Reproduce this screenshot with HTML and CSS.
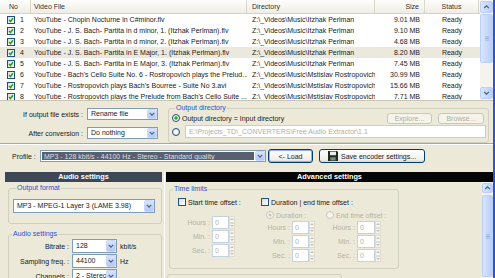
FILE: index.html
```html
<!DOCTYPE html>
<html lang="en">
<head>
  <meta charset="UTF-8">
  <title>Free Audio Extractor</title>
  <link rel="stylesheet" href="styles.css">
</head>
<body>
<div class="app">

  <!-- file list -->
  <div class="list">
    <div class="grid">
      <div class="row head">
        <div class="c-no">No</div>
        <div class="c-file">Video File</div>
        <div class="c-dir">Directory</div>
        <div class="c-size">Size</div>
        <div class="c-status">Status</div>
      </div>
      <div class="row">
        <div class="c-no"><span class="chk"><svg viewBox="0 0 6 6"><path d="M1 3l1.5 1.5L5 1.2"/></svg></span>1</div>
        <div class="c-file">YouTube - Chopin Nocturne in C#minor.flv</div>
        <div class="c-dir">Z:\_Videos\Music\Itzhak Perlman</div>
        <div class="c-size">9.01 MB</div>
        <div class="c-status">Ready</div>
      </div>
      <div class="row">
        <div class="c-no"><span class="chk"><svg viewBox="0 0 6 6"><path d="M1 3l1.5 1.5L5 1.2"/></svg></span>2</div>
        <div class="c-file">YouTube - J. S. Bach- Partita in d minor, 1. (Itzhak Perlman).flv</div>
        <div class="c-dir">Z:\_Videos\Music\Itzhak Perlman</div>
        <div class="c-size">9.10 MB</div>
        <div class="c-status">Ready</div>
      </div>
      <div class="row">
        <div class="c-no"><span class="chk"><svg viewBox="0 0 6 6"><path d="M1 3l1.5 1.5L5 1.2"/></svg></span>3</div>
        <div class="c-file">YouTube - J. S. Bach- Partita in d minor, 2. (Itzhak Perlman).flv</div>
        <div class="c-dir">Z:\_Videos\Music\Itzhak Perlman</div>
        <div class="c-size">4.68 MB</div>
        <div class="c-status">Ready</div>
      </div>
      <div class="row sel">
        <div class="c-no"><span class="chk"><svg viewBox="0 0 6 6"><path d="M1 3l1.5 1.5L5 1.2"/></svg></span>4</div>
        <div class="c-file">YouTube - J. S. Bach- Partita in E Major, 1. (Itzhak Perlman).flv</div>
        <div class="c-dir">Z:\_Videos\Music\Itzhak Perlman</div>
        <div class="c-size">8.20 MB</div>
        <div class="c-status">Ready</div>
      </div>
      <div class="row">
        <div class="c-no"><span class="chk"><svg viewBox="0 0 6 6"><path d="M1 3l1.5 1.5L5 1.2"/></svg></span>5</div>
        <div class="c-file">YouTube - J. S. Bach- Partita in E Major, 3. (Itzhak Perlman).flv</div>
        <div class="c-dir">Z:\_Videos\Music\Itzhak Perlman</div>
        <div class="c-size">7.45 MB</div>
        <div class="c-status">Ready</div>
      </div>
      <div class="row">
        <div class="c-no"><span class="chk"><svg viewBox="0 0 6 6"><path d="M1 3l1.5 1.5L5 1.2"/></svg></span>6</div>
        <div class="c-file">YouTube - Bach's Cello Suite No. 6 - Rostropovich plays the Prelud...</div>
        <div class="c-dir">Z:\_Videos\Music\Mstislav Rostropovich</div>
        <div class="c-size">30.99 MB</div>
        <div class="c-status">Ready</div>
      </div>
      <div class="row">
        <div class="c-no"><span class="chk"><svg viewBox="0 0 6 6"><path d="M1 3l1.5 1.5L5 1.2"/></svg></span>7</div>
        <div class="c-file">YouTube - Rostropovich plays Bach's Bourree - Suite No 3.avi</div>
        <div class="c-dir">Z:\_Videos\Music\Mstislav Rostropovich</div>
        <div class="c-size">15.66 MB</div>
        <div class="c-status">Ready</div>
      </div>
      <div class="row">
        <div class="c-no"><span class="chk"><svg viewBox="0 0 6 6"><path d="M1 3l1.5 1.5L5 1.2"/></svg></span>8</div>
        <div class="c-file">YouTube - Rostropovich plays the Prelude from Bach's Cello Suite ...</div>
        <div class="c-dir">Z:\_Videos\Music\Mstislav Rostropovich</div>
        <div class="c-size">7.71 MB</div>
        <div class="c-status">Ready</div>
      </div>
    </div>
    <div class="vscroll">
      <div class="sb-btn"><svg viewBox="0 0 8 5"><path d="M1 4L4 1l3 3"/></svg></div>
      <div class="sb-thumb"><svg viewBox="0 0 5 5"><path d="M0 .5h5M0 2.5h5M0 4.5h5"/></svg></div>
      <div class="sb-track"></div>
      <div class="sb-btn"><svg viewBox="0 0 8 5"><path d="M1 1l3 3 3-3"/></svg></div>
    </div>
  </div>

  <!-- output options -->
  <div class="opts">
    <div class="opt-left">
      <div class="field">
        <span class="lbl">If output file exists :</span>
        <div class="combo w71"><span class="val">Rename file</span><span class="drop"><svg viewBox="0 0 8 5"><path d="M1 1l3 3 3-3"/></svg></span></div>
      </div>
      <div class="field">
        <span class="lbl">After conversion :</span>
        <div class="combo w71"><span class="val">Do nothing</span><span class="drop"><svg viewBox="0 0 8 5"><path d="M1 1l3 3 3-3"/></svg></span></div>
      </div>
    </div>
    <fieldset class="outdir">
      <legend>Output directory</legend>
      <div class="od-row">
        <span class="radio on"></span>
        <span class="od-text">Output directory = Input directory</span>
        <span class="btn dis w45">Explore...</span>
        <span class="btn dis w46">Browse...</span>
      </div>
      <div class="od-row second">
        <span class="radio"></span>
        <div class="edit dis">E:\Projects_TD\_CONVERTERS\Free Audio Extractor\1.1</div>
      </div>
    </fieldset>
  </div>

  <div class="sep"></div>

  <!-- profile -->
  <div class="profile">
    <span class="plbl">Profile :</span>
    <div class="combo w226 prof"><span class="val">MP3 - 128 kbit/s - 44100 Hz - Stereo - Standard quality</span><span class="drop"><svg viewBox="0 0 8 5"><path d="M1 1l3 3 3-3"/></svg></span></div>
    <span class="btn def w45">&lt;- Load</span>
    <span class="btn w106 save">
      <svg class="floppy" viewBox="0 0 10 10"><path d="M0 0h9l1 1v9H0z" fill="#1f2d22"/><rect x="2" y="0.6" width="6" height="3.6" fill="#e9efe9"/><rect x="2.4" y="6.2" width="5.2" height="3.3" fill="#7d8b80"/></svg>
      Save encoder settings...
    </span>
  </div>

  <!-- settings panels -->
  <div class="panels">
    <div class="panel left">
      <div class="ph audio">Audio settings</div>
      <fieldset class="fmt">
        <legend>Output format</legend>
        <div class="combo w142 tall"><span class="val">MP3 - MPEG-1 Layer 3 (LAME 3.98)</span><span class="drop"><svg viewBox="0 0 8 5"><path d="M1 1l3 3 3-3"/></svg></span></div>
      </fieldset>
      <fieldset class="aset">
        <legend>Audio settings</legend>
        <div class="arow">
          <span class="albl">Bitrate :</span>
          <div class="combo w45 tall"><span class="val">128</span><span class="drop"><svg viewBox="0 0 8 5"><path d="M1 1l3 3 3-3"/></svg></span></div>
          <span class="unit">kbit/s</span>
        </div>
        <div class="arow">
          <span class="albl">Sampling freq. :</span>
          <div class="combo w45 tall"><span class="val">44100</span><span class="drop"><svg viewBox="0 0 8 5"><path d="M1 1l3 3 3-3"/></svg></span></div>
          <span class="unit">Hz</span>
        </div>
        <div class="arow">
          <span class="albl">Channels :</span>
          <div class="combo w45 tall"><span class="val">2 - Stereo</span><span class="drop"><svg viewBox="0 0 8 5"><path d="M1 1l3 3 3-3"/></svg></span></div>
        </div>
      </fieldset>
    </div>

    <div class="panel right">
      <div class="ph adv">Advanced settings</div>
      <div class="adv-body">
        <div class="adv-content">
          <fieldset class="limits">
            <legend>Time limits</legend>
            <div class="tl-cols">
              <div class="col-a">
                <div class="ck-row"><span class="box"></span>Start time offset :</div>
                <div class="spins">
                  <div class="sp-row"><span class="slbl">Hours :</span><span class="ed">0</span><span class="arr"><i class="up"></i><i class="dn"></i></span></div>
                  <div class="sp-row"><span class="slbl">Min. :</span><span class="ed">0</span><span class="arr"><i class="up"></i><i class="dn"></i></span></div>
                  <div class="sp-row"><span class="slbl">Sec. :</span><span class="ed">0</span><span class="arr"><i class="up"></i><i class="dn"></i></span></div>
                </div>
              </div>
              <div class="col-b">
                <div class="ck-row"><span class="box"></span>Duration | end time offset :</div>
                <div class="subcols">
                  <div class="sub dur">
                    <div class="rd-row"><span class="radio on dis"></span>Duration :</div>
                    <div class="sp-row"><span class="slbl">Hours :</span><span class="ed">0</span><span class="arr"><i class="up"></i><i class="dn"></i></span></div>
                    <div class="sp-row"><span class="slbl">Min. :</span><span class="ed">0</span><span class="arr"><i class="up"></i><i class="dn"></i></span></div>
                    <div class="sp-row"><span class="slbl">Sec. :</span><span class="ed">0</span><span class="arr"><i class="up"></i><i class="dn"></i></span></div>
                  </div>
                  <div class="sub end">
                    <div class="rd-row"><span class="radio dis"></span>End time offset :</div>
                    <div class="sp-row"><span class="slbl">Hours :</span><span class="ed">0</span><span class="arr"><i class="up"></i><i class="dn"></i></span></div>
                    <div class="sp-row"><span class="slbl">Min. :</span><span class="ed">0</span><span class="arr"><i class="up"></i><i class="dn"></i></span></div>
                    <div class="sp-row"><span class="slbl">Sec. :</span><span class="ed">0</span><span class="arr"><i class="up"></i><i class="dn"></i></span></div>
                  </div>
                </div>
              </div>
            </div>
          </fieldset>
          <div class="more"></div>
        </div>
        <div class="vscroll small">
          <div class="sb-btn"><svg viewBox="0 0 8 5"><path d="M1 4L4 1l3 3"/></svg></div>
          <div class="sb-thumb long"><svg viewBox="0 0 5 5"><path d="M0 .5h5M0 2.5h5M0 4.5h5"/></svg></div>
        </div>
      </div>
    </div>
  </div>

</div>
</body>
</html>
```

FILE: styles.css
```css
* {
  box-sizing: border-box;
}
body {
  margin: 0;
  width: 495px;
  height: 278px;
  overflow: hidden;
  background: #ece9d8;
  font-family: "Liberation Sans", Arial, sans-serif;
  font-size: 7px;
  color: #1a1a1a;
}
.app {
  display: flex;
  flex-direction: column;
  height: 278px;
  border-right: 2px solid #2a55d4;
  overflow: hidden;
}

/* list */
.list {
  display: flex;
  height: 101px;
  flex-shrink: 0;
  background: #fff;
  border-bottom: 1px solid #c9c6b6;
}
.grid {
  flex: 1;
  overflow: hidden;
}
.row {
  display: flex;
  height: 11px;
  line-height: 11px;
  white-space: nowrap;
}
.row > div {
  flex-shrink: 0;
  overflow: hidden;
}
.row.sel {
  background: #ebe9de;
}
.head {
  height: 14px;
  line-height: 13px;
  background: linear-gradient(#fdfdfb, #efede4);
  border-bottom: 1px solid #d6d2c2;
  color: #333;
}
.head > div {
  border-right: 1px solid #dcd8c8;
}
.c-no {
  width: 31px;
  padding-left: 7px;
  display: flex;
  align-items: center;
  gap: 5px;
}
.head .c-no {
  padding-left: 9px;
}
.c-file {
  width: 216px;
  padding-left: 3px;
}
.c-dir {
  width: 128px;
  padding-left: 5px;
}
.c-size {
  width: 50px;
  text-align: right;
  padding-right: 5px;
}
.c-status {
  width: 54px;
  text-align: center;
}
.chk {
  width: 8px;
  height: 8px;
  border: 1px solid #1c5180;
  background: linear-gradient(135deg, #dedcd3, #fff);
  display: flex;
}
.chk svg {
  width: 6px;
  height: 6px;
  fill: none;
  stroke: #21a121;
  stroke-width: 1.5;
}

/* scrollbars */
.vscroll {
  width: 13px;
  display: flex;
  flex-direction: column;
  background: #f4f3ee;
  padding: 1px 0;
}
.vscroll.small {
  width: 11px;
}
.sb-btn,
.sb-thumb {
  border: 1px solid #bcd0f7;
  border-radius: 2px;
  background: linear-gradient(90deg, #dbe6fd, #b9cdf8);
  display: flex;
  align-items: center;
  justify-content: center;
}
.sb-btn {
  height: 12px;
}
.sb-btn svg {
  width: 7px;
  height: 4px;
  fill: none;
  stroke: #4d6185;
  stroke-width: 1.5;
}
.sb-thumb {
  height: 49px;
  margin-top: 1px;
}
.sb-thumb.long {
  height: 100px;
  margin-top: 2px;
}
.sb-thumb svg {
  width: 4px;
  height: 5px;
  stroke: #8fa9e4;
  stroke-width: 1;
}
.sb-track {
  flex: 1;
}

/* combos, buttons, edits */
.combo {
  display: flex;
  height: 12px;
  line-height: 10px;
  border: 1px solid #7f9db9;
  background: #fff;
  white-space: nowrap;
}
.combo.tall {
  height: 14px;
  line-height: 12px;
}
.combo .val {
  flex: 1;
  padding-left: 3px;
  overflow: hidden;
}
.drop {
  width: 10px;
  border: 1px solid #c8d7fb;
  border-radius: 2px;
  background: linear-gradient(#d9e4fd, #b3c8f5);
  display: flex;
  align-items: center;
  justify-content: center;
}
.drop svg {
  width: 6px;
  height: 4px;
  fill: none;
  stroke: #4d6185;
  stroke-width: 1.6;
}
.combo.prof .val {
  margin: 1px;
  padding-left: 2px;
  background: #586070;
  color: #dcdde0;
}
.w45 { width: 45px; }
.w46 { width: 46px; }
.w71 { width: 71px; }
.w106 { width: 106px; }
.w142 { width: 142px; }
.w226 { width: 226px; }

.btn {
  display: flex;
  align-items: center;
  justify-content: center;
  height: 14px;
  border: 1px solid #003c74;
  border-radius: 3px;
  background: linear-gradient(#ffffff, #f0efea 80%, #d8d3c8);
  white-space: nowrap;
}
.btn.dis {
  height: 11px;
  border-color: #cac8bb;
  background: #f5f4ea;
  color: #b2afa2;
}
.btn.def {
  box-shadow: inset 0 0 0 1px #8fb2ec;
}
.edit {
  height: 13px;
  line-height: 11px;
  border: 1px solid #7f9db9;
  background: #fff;
  padding-left: 3px;
  white-space: nowrap;
  overflow: hidden;
}
.edit.dis {
  color: #b2afa2;
  border-color: #c3cfdd;
}

/* radio / checkbox */
.radio {
  width: 8px;
  height: 8px;
  flex-shrink: 0;
  border-radius: 50%;
  border: 1px solid #1c5180;
  background: radial-gradient(#fff, #dedcd2);
}
.radio.on {
  background: radial-gradient(circle, #3aa838 0 1.4px, #fff 2px, #e2e1d7);
}
.radio.dis {
  border-color: #cac8bb;
  background: #f6f5ee;
}
.radio.on.dis {
  background: radial-gradient(circle, #cac8bb 0 1.3px, #f6f5ee 1.8px);
}
.box {
  width: 8px;
  height: 8px;
  flex-shrink: 0;
  margin-right: 2px;
  border: 1px solid #1c5180;
  background: linear-gradient(135deg, #dedcd3, #fff);
}

/* group boxes */
fieldset {
  margin: 0;
  padding: 0;
  min-width: 0;
  border: 1px solid #d0d0bf;
  border-radius: 3px;
}
legend {
  margin-left: 3px;
  padding: 0 1px;
  line-height: 8px;
  color: #2255cc;
}

/* output options */
.opts {
  display: flex;
  height: 42px;
  flex-shrink: 0;
}
.opt-left {
  width: 165px;
  padding-top: 7px;
  display: flex;
  flex-direction: column;
  gap: 7px;
}
.field {
  display: flex;
  align-items: center;
}
.lbl {
  width: 83px;
  margin-right: 4px;
  text-align: right;
}
.outdir {
  margin: 3px 0 0 3px;
  width: 321px;
  height: 39px;
  padding: 0 4px 0 3px;
}
.od-row {
  display: flex;
  align-items: center;
  height: 12px;
  gap: 6px;
}
.od-row .od-text {
  margin-left: -4px;
  flex: 1;
}
.od-row.second {
  margin-top: 1px;
  height: 13px;
  gap: 5px;
}
.od-row.second .edit {
  flex: 1;
  margin-right: -2px;
}

.sep {
  height: 2px;
  flex-shrink: 0;
  border-top: 1px solid #aca899;
  border-bottom: 1px solid #fff;
}

/* profile */
.profile {
  display: flex;
  align-items: center;
  height: 22px;
  flex-shrink: 0;
  padding-left: 12px;
}
.plbl {
  width: 28px;
}
.profile .btn.def {
  margin-left: 2px;
}
.profile .save {
  margin-left: 6px;
  justify-content: flex-start;
  padding-left: 8px;
  gap: 3px;
}
.floppy {
  width: 10px;
  height: 10px;
}

/* panels */
.panels {
  flex: 1;
  display: flex;
  padding-top: 5px;
  min-height: 0;
}
.panel {
  display: flex;
  flex-direction: column;
  overflow: hidden;
}
.panel.left {
  width: 165px;
  padding: 0 2px 0 5px;
  border-right: 1px solid #fff;
}
.panel.right {
  flex: 1;
  padding-left: 1px;
}
.ph {
  height: 10px;
  flex-shrink: 0;
  line-height: 10px;
  text-align: center;
  font-weight: bold;
  font-size: 7.3px;
  color: #fff;
}
.ph.audio {
  background: #3e4755;
}
.ph.adv {
  background: #050505;
}
.fmt {
  margin: 2px 0 0 3px;
  width: 154px;
  padding: 7px 4px 10px;
}
.aset {
  margin: 6px 0 0 3px;
  width: 154px;
  padding: 1px 0 20px;
}
.arow {
  display: flex;
  align-items: center;
  height: 14px;
  margin-bottom: 1px;
}
.albl {
  width: 60px;
  margin-right: 3px;
  text-align: right;
}
.unit {
  margin-left: 3px;
}

.adv-body {
  flex: 1;
  display: flex;
  min-height: 0;
}
.adv-content {
  flex: 1;
  overflow: hidden;
}
.limits {
  margin: 3px 0 0 3px;
  width: 230px;
  padding: 0 0 5px;
}
.tl-cols {
  display: flex;
}
.col-a {
  width: 91px;
}
.ck-row {
  display: flex;
  align-items: center;
  height: 10px;
  margin-top: 4px;
}
.col-a .ck-row {
  padding-left: 8px;
}
.spins {
  margin-top: 9px;
}
.sp-row {
  display: flex;
  height: 13px;
  margin-bottom: 1px;
  line-height: 13px;
  color: #b5b2a4;
}
.slbl {
  width: 40px;
  margin-right: 2px;
  text-align: right;
}
.ed {
  width: 17px;
  height: 13px;
  line-height: 11px;
  padding-left: 2px;
  border: 1px solid #c6d1df;
  background: #fff;
}
.arr {
  width: 6px;
  display: flex;
  flex-direction: column;
}
.arr i {
  flex: 1;
  border: 1px solid #dfdcd1;
  background: #f6f5ef;
  display: flex;
  align-items: center;
  justify-content: center;
}
.arr i::after {
  content: "";
  border: 2px solid transparent;
}
.arr .up::after {
  border-top: 0;
  border-bottom-color: #c6c3b6;
}
.arr .dn::after {
  border-bottom: 0;
  border-top-color: #c6c3b6;
}
.subcols {
  display: flex;
  gap: 11px;
  padding-left: 5px;
}
.rd-row {
  display: flex;
  align-items: center;
  gap: 2px;
  height: 8px;
  margin: 4px 0 2px;
  color: #b5b2a4;
}
.dur .slbl {
  width: 24px;
}
.end .slbl {
  width: 29px;
}
.end .ed {
  width: 18px;
}
.more {
  margin: 5px 0 0 1px;
  width: 175px;
  height: 20px;
  border: 1px solid #d0d0bf;
  border-radius: 3px;
}
```
